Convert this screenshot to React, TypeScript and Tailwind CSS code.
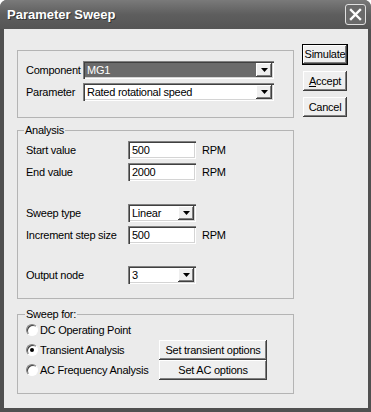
import React from "react";

const sunken =
  "bg-white shadow-[inset_1px_1px_0_#808080,inset_2px_2px_0_#404040,inset_-1px_-1px_0_#ffffff,inset_-2px_-2px_0_#d4d4d4]";
const raised =
  "bg-[#efefef] shadow-[inset_-1px_-1px_0_#404040,inset_1px_1px_0_#ffffff,inset_-2px_-2px_0_#808080]";

function Tri() {
  return (
    <svg width="7" height="4" viewBox="0 0 7 4">
      <path d="M0 0H7L3.5 4Z" fill="#000" />
    </svg>
  );
}

function Select({
  value,
  width,
  dark,
}: {
  value: string;
  width: string;
  dark?: boolean;
}) {
  return (
    <div className={`h-[18px] ${width} ${sunken} flex items-center p-[2px]`}>
      <div
        className={`flex-1 h-full flex items-center pl-[2px] ${
          dark ? "bg-[#6b6b6b] text-white" : ""
        }`}
      >
        {value}
      </div>
      <div
        className={`w-[16px] h-full ${raised} flex items-center justify-center`}
      >
        <Tri />
      </div>
    </div>
  );
}

function Field({ value }: { value: string }) {
  return (
    <div className={`h-[18px] w-[68px] ${sunken} flex items-center pl-[4px]`}>
      {value}
    </div>
  );
}

function Row({
  label,
  children,
  unit,
  className = "",
}: {
  label: string;
  children: React.ReactNode;
  unit?: boolean;
  className?: string;
}) {
  return (
    <div className={`flex items-center h-[18px] ${className}`}>
      <div className="w-[102px]">{label}</div>
      {children}
      {unit && <div className="ml-[6px]">RPM</div>}
    </div>
  );
}

function Radio({ checked, label }: { checked?: boolean; label: string }) {
  return (
    <div className="flex items-center h-[20px]">
      <div className="w-[12px] h-[12px] rounded-full bg-white border border-[#808080] border-b-[#ffffff] border-r-[#ffffff] shadow-[inset_1px_1px_0_#404040] flex items-center justify-center">
        {checked && <div className="w-[4px] h-[4px] rounded-full bg-black" />}
      </div>
      <div className="ml-[2px]">{label}</div>
    </div>
  );
}

function Btn({
  children,
  className = "",
  def,
}: {
  children: React.ReactNode;
  className?: string;
  def?: boolean;
}) {
  return (
    <div
      className={`${
        def ? "border border-black" : ""
      } ${className} flex`}
    >
      <div className={`flex-1 ${raised} flex items-center justify-center`}>
        {children}
      </div>
    </div>
  );
}

export default function App() {
  return (
    <div className="w-[371px] h-[412px] flex flex-col bg-[#505050] rounded-t-[7px] overflow-hidden font-['Liberation_Sans',Arial,sans-serif] text-[11px] tracking-[-0.25px] text-black leading-[13px]">
      <div className="h-[29px] shrink-0 flex items-center justify-between pl-[7px] pr-[5px] bg-linear-to-b from-[#7a7a7a] via-[#5e5e5e] to-[#555555]">
        <div className="text-white font-bold text-[13px] tracking-normal [text-shadow:1px_1px_0_#333]">
          Parameter Sweep
        </div>
        <div className="w-[21px] h-[21px] rounded-[3px] border border-[#e0e0e0] bg-[#6a6a6a] flex items-center justify-center">
          <svg width="13" height="13" viewBox="0 0 13 13">
            <path
              d="M2 2L11 11M11 2L2 11"
              stroke="#fff"
              strokeWidth="2.4"
              strokeLinecap="square"
            />
          </svg>
        </div>
      </div>
      <div className="flex-1 flex bg-[#ebebeb] ml-[4px] mr-[3px] mb-[4px] pl-[13px]">
        <div className="w-[277px] flex flex-col">
          <div className="mt-[21px] h-[68px] border border-[#b4b4b4] pl-[8px] pt-[10px] flex flex-col gap-[4px]">
            <div className="flex items-center h-[18px]">
              <div className="w-[57px]">Component</div>
              <Select value="MG1" width="w-[191px]" dark />
            </div>
            <div className="flex items-center h-[18px]">
              <div className="w-[57px]">Parameter</div>
              <Select value="Rated rotational speed" width="w-[191px]" />
            </div>
          </div>

          <div className="relative mt-[12px] h-[169px] border border-[#b4b4b4] pl-[8px] pt-[10px] flex flex-col">
            <span className="absolute -top-[7px] left-[6px] px-[1px] bg-[#ebebeb]">
              Analysis
            </span>
            <Row label="Start value" unit>
              <Field value="500" />
            </Row>
            <Row label="End value" unit className="mt-[4px]">
              <Field value="2000" />
            </Row>
            <Row label="Sweep type" className="mt-[23px]">
              <Select value="Linear" width="w-[68px]" />
            </Row>
            <Row label="Increment step size" unit className="mt-[4px]">
              <Field value="500" />
            </Row>
            <Row label="Output node" className="mt-[22px]">
              <Select value="3" width="w-[68px]" />
            </Row>
          </div>

          <div className="relative mt-[15px] h-[80px] border border-[#b4b4b4] pl-[8px] pt-[6px] flex flex-col">
            <span className="absolute -top-[7px] left-[7px] px-[1px] bg-[#ebebeb]">
              Sweep for:
            </span>
            <div className="h-[18px] flex items-center">
              <Radio label="DC Operating Point" />
            </div>
            <div className="flex mt-[1px]">
              <div className="w-[133px] flex flex-col">
                <Radio checked label="Transient Analysis" />
                <Radio label="AC Frequency Analysis" />
              </div>
              <div className="w-[108px] flex flex-col">
                <Btn className="h-[20px]">Set transient options</Btn>
                <Btn className="h-[20px]">Set AC options</Btn>
              </div>
            </div>
          </div>
        </div>

        <div className="ml-[8px] pt-[15px] flex flex-col w-[46px]">
          <Btn def className="h-[21px]">
            Simulate
          </Btn>
          <Btn className="h-[20px] mt-[6px] mx-[1px]">
            <span>
              <span className="underline">A</span>ccept
            </span>
          </Btn>
          <Btn className="h-[20px] mt-[6px] mx-[1px]">Cancel</Btn>
        </div>
      </div>
    </div>
  );
}
